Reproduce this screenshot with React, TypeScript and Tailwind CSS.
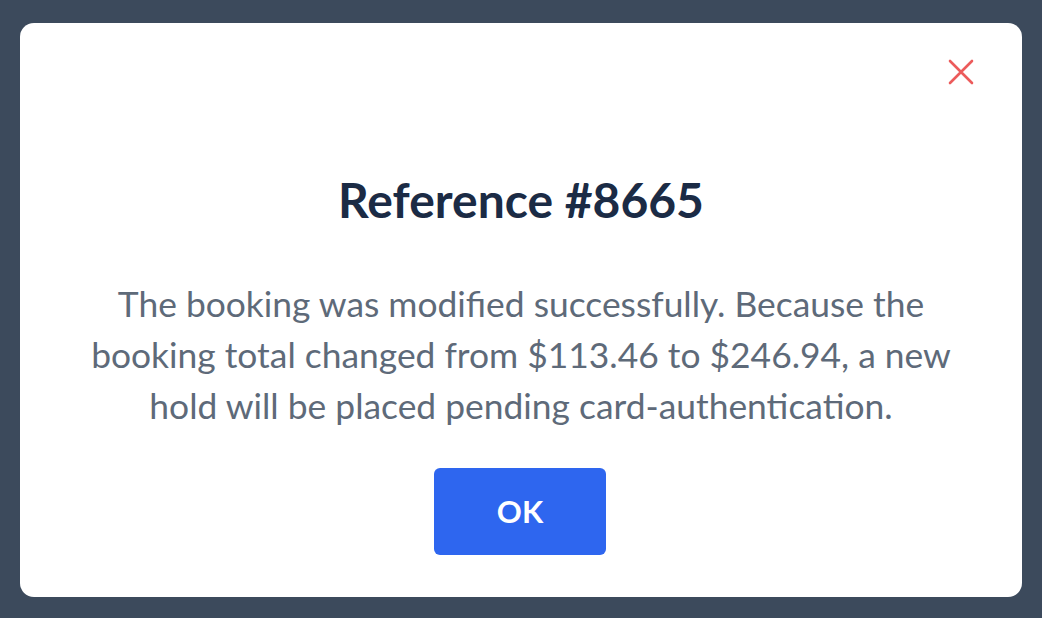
import React from 'react';

const App: React.FC = () => {
  return (
    <div className="h-[618px] w-[1042px] bg-[#3c4a5c] flex flex-col" style={{ fontFamily: 'Lato, "Open Sans", sans-serif' }}>
      <div className="flex-1 px-5 pt-[23px] pb-[21px]">
        <div className="relative h-full bg-white rounded-[14px] flex flex-col items-center">
          {/* close */}
          <button className="absolute right-[45px] top-[33px] w-[32px] h-[32px] flex items-center justify-center">
            <svg width="28" height="28" viewBox="0 0 28 28" fill="none" stroke="#ec5b5b" strokeWidth="2.6" strokeLinecap="round">
              <path d="M3 3L25 25M25 3L3 25" />
            </svg>
          </button>

          <h2 className="mt-[148px] text-[48px] leading-[58px] font-bold text-[#1b2b45]">Reference #8665</h2>

          <p className="mt-[49px] w-[880px] text-center text-[35.4px] leading-[51px] text-[#5e6a79]">
            The booking was modified successfully. Because the booking total changed from $113.46 to $246.94, a new hold will be placed pending card-authentication.
          </p>

          <button className="mt-[37px] ml-[-2px] w-[172px] h-[87px] rounded-[6px] bg-[#2e66ef] text-white text-[31px] font-bold">
            OK
          </button>
        </div>
      </div>
    </div>
  );
};

export default App;
